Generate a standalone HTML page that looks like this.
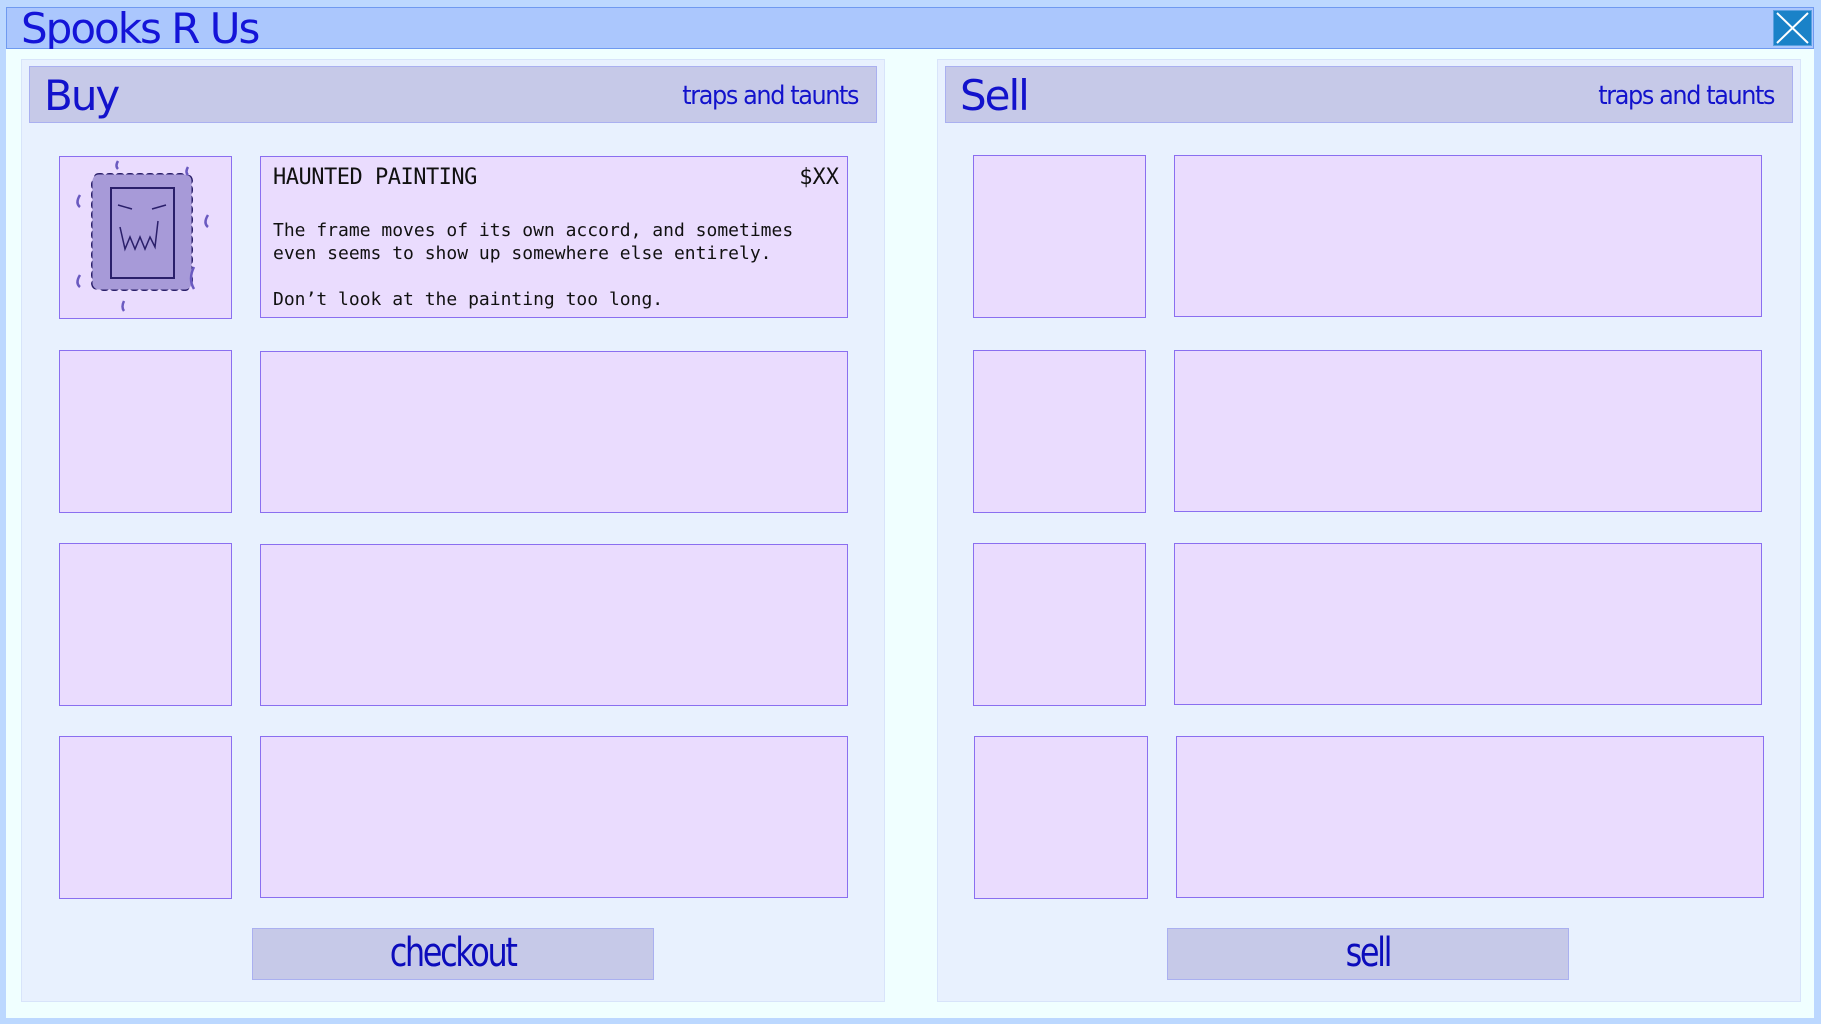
<!DOCTYPE html>
<html><head><meta charset="utf-8"><style>
*{margin:0;padding:0;box-sizing:border-box}
body{width:1821px;height:1024px;background:#bcd8ff;position:relative;overflow:hidden;font-family:"DejaVu Sans","Liberation Sans",sans-serif}
.abs{position:absolute}
.title{left:6px;top:7px;width:1808px;height:42px;background:#abc7fd;border:1px solid #6f9af0}
.title span{position:absolute;left:14px;top:-4px;font-size:42px;color:#1414d8;letter-spacing:-2px}
.close{left:1773px;top:10px;width:39px;height:36px;background:#1a82c8;border:1px solid #5aa0e0}
.main{left:6px;top:49px;width:1808px;height:969px;background:#f0ffff}
.panel{top:59px;width:864px;height:943px;background:#e8f1fe;border:1px solid #d8e4fa}
.hdr{top:66px;height:57px;background:#c6c9e8;border:1px solid #aab0f0}
.hdr .t{position:absolute;left:14px;top:4px;font-size:42px;color:#1212cc;letter-spacing:-2px}
.hdr .s{position:absolute;right:18px;top:14px;font-size:26px;color:#1212cc;letter-spacing:-1.5px;transform:scaleX(.92);transform-origin:right}
.box{background:#eadcfe;border:1.5px solid #8a6ff0}
.btn{top:928px;width:402px;height:52px;background:#c6c9e8;border:1px solid #aab0f0;color:#0c0cbc;font-size:40px;text-align:center;line-height:48px;letter-spacing:-3px}
.btn span{display:inline-block;transform:scaleX(.8)}
.mono{font-family:"DejaVu Sans Mono","Liberation Mono",monospace;color:#111}
</style></head><body>
<div class="abs title"><span>Spooks R Us</span></div>
<div class="abs close"><svg width="37" height="34"><path d="M3 2L34 32M34 2L3 32" stroke="#fff" stroke-width="2"/></svg></div>
<div class="abs main"></div>
<div class="abs panel" style="left:21px"></div>
<div class="abs panel" style="left:937px"></div>
<div class="abs hdr" style="left:29px;width:848px"><span class="t">Buy</span><span class="s">traps and taunts</span></div>
<div class="abs hdr" style="left:945px;width:848px"><span class="t">Sell</span><span class="s">traps and taunts</span></div>

<div class="abs box" style="left:59px;top:156px;width:173px;height:163px">
<svg width="170" height="160" viewBox="0 0 170 160">
<rect x="35" y="20" width="94" height="110" rx="4" fill="#a79ad8" stroke="#2a1f6a" stroke-width="8" stroke-dasharray="2 8" stroke-linecap="round"/>
<rect x="35" y="20" width="94" height="110" rx="4" fill="#a79ad8" stroke="#a79ad8" stroke-width="5"/>
<rect x="51" y="31" width="63" height="90" fill="#a79ad8" stroke="#2a1f6a" stroke-width="2"/>
<path d="M58 48l14 4M106 48l-14 4M60 70l5 22 5-12 5 12 5-12 5 12 5-12 5 10 3-26" fill="none" stroke="#2a1f6a" stroke-width="1.5"/>
<g fill="none" stroke="#6a5ac0" stroke-width="2.5"><path d="M20 38q-5 8 0 12"/><path d="M148 58q-5 8 0 12"/><path d="M20 118q-5 8 0 12"/><path d="M134 110q-6 12 0 22"/><path d="M58 4q-3 5 0 8"/><path d="M128 10q-3 5 0 8"/><path d="M64 144q-3 6 0 10"/></g>
</svg></div>
<div class="abs box" style="left:260px;top:156px;width:588px;height:162px">
<div class="abs mono" style="left:12px;top:8px;font-size:22px;letter-spacing:-0.5px">HAUNTED PAINTING</div>
<div class="abs mono" style="right:8px;top:8px;font-size:22px">$XX</div>
<div class="abs mono" style="left:12px;top:62px;font-size:18px;line-height:23px;white-space:pre">The frame moves of its own accord, and sometimes
even seems to show up somewhere else entirely.

Don’t look at the painting too long.</div>
</div>

<div class="abs box" style="left:59px;top:350px;width:173px;height:163px"></div>
<div class="abs box" style="left:260px;top:351px;width:588px;height:162px"></div>
<div class="abs box" style="left:59px;top:543px;width:173px;height:163px"></div>
<div class="abs box" style="left:260px;top:544px;width:588px;height:162px"></div>
<div class="abs box" style="left:59px;top:736px;width:173px;height:163px"></div>
<div class="abs box" style="left:260px;top:736px;width:588px;height:162px"></div>

<div class="abs box" style="left:973px;top:155px;width:173px;height:163px"></div>
<div class="abs box" style="left:1174px;top:155px;width:588px;height:162px"></div>
<div class="abs box" style="left:973px;top:350px;width:173px;height:163px"></div>
<div class="abs box" style="left:1174px;top:350px;width:588px;height:162px"></div>
<div class="abs box" style="left:973px;top:543px;width:173px;height:163px"></div>
<div class="abs box" style="left:1174px;top:543px;width:588px;height:162px"></div>
<div class="abs box" style="left:974px;top:736px;width:174px;height:163px"></div>
<div class="abs box" style="left:1176px;top:736px;width:588px;height:162px"></div>

<div class="abs btn" style="left:252px"><span>checkout</span></div>
<div class="abs btn" style="left:1167px"><span>sell</span></div>
</body></html>
